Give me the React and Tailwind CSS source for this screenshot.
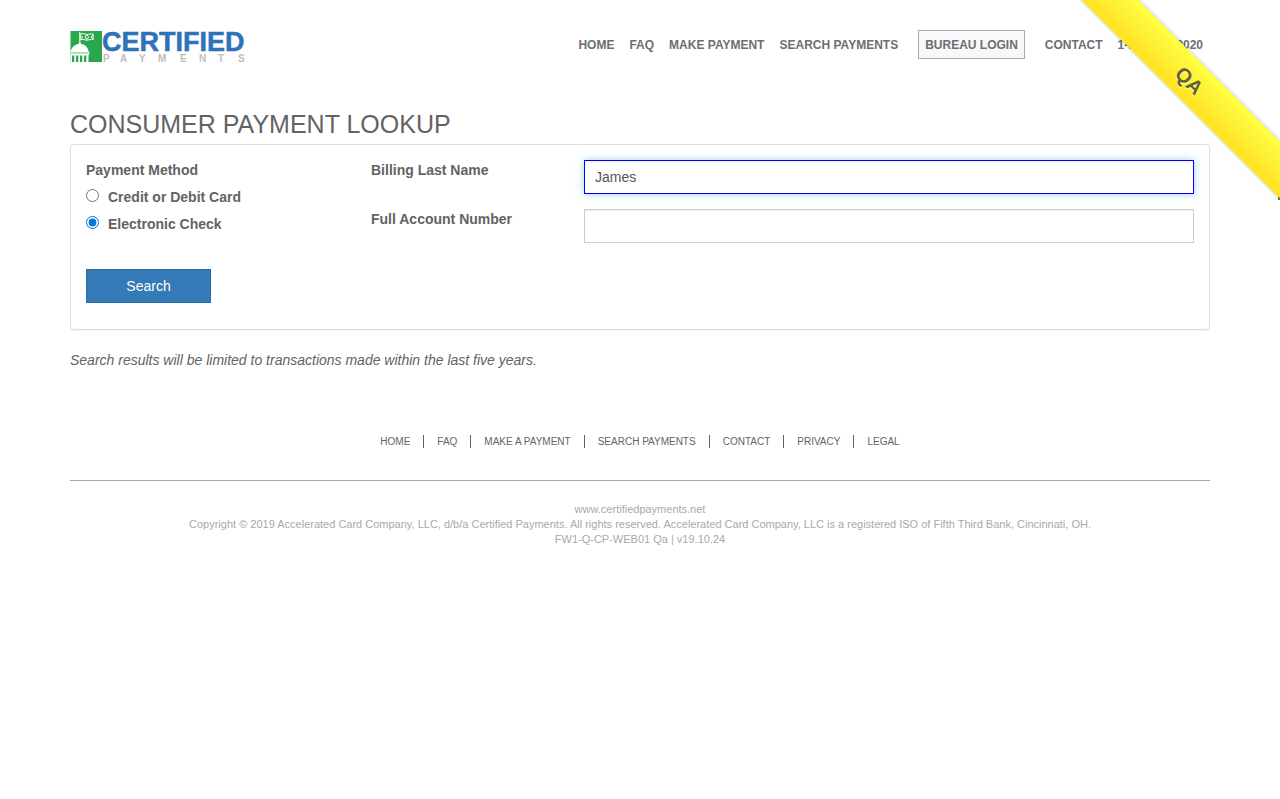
import { useState } from "react";

function Logo() {
  return (
    <svg viewBox="0 0 176 34" className="h-[34px] w-44 overflow-visible" role="img" aria-label="Certified Payments">
      <rect x="0.5" y="1" width="31.500" height="31" fill="#27a84a" />
      <path d="M9.800 2v12" stroke="#fff" strokeWidth="1" />
      <g fill="none" stroke="#fff" strokeWidth="1">
        <path d="M10.200 4.200c2.500-1.500 4.500.2 6.800.2s4-1 6.200-.4v5.600c-2.500-.6-4 .5-6.400.5s-4.400-1.400-6.600-.2z" />
        <ellipse cx="16.800" cy="7.200" rx="1.600" ry="1.800" />
        <path d="M11 5.800l1.800 1.400L11 8.600M22.800 5.400l-2 1.600 2 1.600" />
      </g>
      <path d="M0.500 22.200c.5-4.500 4.200-8 8.300-8.300v-1.400h2v1.400c4.200.3 7.600 3.800 8 8.300z" fill="#fff" />
      <path d="M0.500 21.700h18.800v2.800H18.500V32H0.500z" fill="#fff" />
      <path d="M0.500 22.900h18" stroke="#27a84a" strokeWidth="0.700" />
      <path d="M2 25.500h2.300V32H2zM6 25.500h2.300V32H6zM10 25.500h2.300V32H10zM14 25.500h2.300V32H14z" fill="#27a84a" />
      <text
        x="32"
        y="21"
        fontFamily="'Liberation Sans', Arial, sans-serif"
        fontWeight="700"
        fontSize="27"
        fill="#2f72b9"
        stroke="#2f72b9"
        strokeWidth="0.500"
      >
        CERTIFIED
      </text>
      <text
        x="33 50 69 88 110 129 148 168"
        y="32"
        fontFamily="'Liberation Sans', Arial, sans-serif"
        fontWeight="700"
        fontSize="10"
        fill="#bcbec0"
      >
        PAYMENTS
      </text>
    </svg>
  );
}

function Ribbon({ children }) {
  return (
    <div className="pointer-events-none absolute top-0 right-0 z-10 size-[200px] overflow-hidden">
      <div className="absolute right-0 bottom-0 h-1 w-0.5 bg-[#6f8a1c]" />
      <div className="absolute top-15 left-[-50px] flex h-10 w-[320px] rotate-45 items-center justify-center bg-linear-to-b from-[#ffff44] to-[#ffe11b] pt-0.5 text-xl leading-none font-bold text-[#665f38] shadow-[0_0_4px_rgba(0,0,0,0.3)] [text-shadow:1px_1px_0_#ffff88]">
        {children}
      </div>
    </div>
  );
}

const footerLinks = ["HOME", "FAQ", "MAKE A PAYMENT", "SEARCH PAYMENTS", "CONTACT", "PRIVACY", "LEGAL"];

const inputClass =
  "h-[34px] w-full border border-[#ccc] px-2.5 text-sm text-[#555] shadow-[inset_0_1px_1px_rgba(0,0,0,0.075)] outline-none focus:border-[#0000ff] focus:shadow-[inset_0_1px_1px_rgba(0,0,0,0.075),0_0_8px_rgba(102,175,233,0.6)]";

const radioClass = "mt-[2px] size-[13px] accent-[#0078d7]";

export default function App() {
  const [method, setMethod] = useState("check");
  const [lastName, setLastName] = useState("James");
  const [account, setAccount] = useState("");

  return (
    <div className="relative bg-white font-['Liberation_Sans',Arial,sans-serif] text-sm text-[#636363]">
      <Ribbon>QA</Ribbon>
      <div className="mx-auto max-w-[1170px] px-[15px]">
        <header className="flex items-start justify-between pt-[30px]">
          <a href="#home">
            <Logo />
          </a>
          <nav className="flex h-[29px] items-center gap-[15px] pr-[7px] text-xs font-bold text-[#6d6e71]">
            <a href="#home">HOME</a>
            <a href="#faq">FAQ</a>
            <a href="#make">MAKE PAYMENT</a>
            <a href="#search">SEARCH PAYMENTS</a>
            <a
              href="#bureau"
              className="mx-[5px] flex h-[29px] items-center border border-[#a7a9ac] bg-[#f8f8f8] px-1.5"
            >
              BUREAU LOGIN
            </a>
            <a href="#contact">CONTACT</a>
            <a href="tel:18665392020">1-866-539-2020</a>
          </nav>
        </header>

        <main>
          <h1 className="mt-[46px] text-[25px] leading-[28px]">CONSUMER PAYMENT LOOKUP</h1>
          <form
            className="mt-[6px] rounded border border-[#ddd] px-[15px] pt-[15px] pb-[26px] shadow-[0_1px_1px_rgba(0,0,0,0.05)]"
            onSubmit={(event) => event.preventDefault()}
          >
            <div className="grid grid-cols-[285fr_823fr]">
              <fieldset>
                <legend className="leading-5 font-bold">Payment Method</legend>
                <div className="mt-[7px] flex flex-col gap-[7px] font-bold">
                  <label className="flex items-start gap-[9px] leading-5">
                    <input
                      type="radio"
                      name="method"
                      className={radioClass}
                      checked={method === "card"}
                      onChange={() => setMethod("card")}
                    />
                    Credit or Debit Card
                  </label>
                  <label className="flex items-start gap-[9px] leading-5">
                    <input
                      type="radio"
                      name="method"
                      className={radioClass}
                      checked={method === "check"}
                      onChange={() => setMethod("check")}
                    />
                    Electronic Check
                  </label>
                </div>
              </fieldset>
              <div className="grid grid-cols-[213fr_610fr] content-start gap-y-[15px]">
                <label htmlFor="lastName" className="leading-5 font-bold">
                  Billing Last Name
                </label>
                <input
                  id="lastName"
                  type="text"
                  autoFocus
                  className={inputClass}
                  value={lastName}
                  onChange={(event) => setLastName(event.target.value)}
                />
                <label htmlFor="account" className="leading-5 font-bold">
                  Full Account Number
                </label>
                <input
                  id="account"
                  type="text"
                  className={inputClass}
                  value={account}
                  onChange={(event) => setAccount(event.target.value)}
                />
              </div>
            </div>
            <button
              type="submit"
              className="mt-[26px] h-[34px] w-[125px] border border-[#2e6da4] bg-[#337ab7] text-sm text-white"
            >
              Search
            </button>
          </form>
          <p className="mt-5 leading-5 italic">
            Search results will be limited to transactions made within the last five years.
          </p>
        </main>

        <footer className="mt-[65px]">
          <nav className="flex justify-center border-b border-[#a7a9ac] pb-8 text-[10px] leading-[13px]">
            {footerLinks.map((name) => (
              <a key={name} href="#" className="border-l border-[#636363] px-[13px] first:border-l-0">
                {name}
              </a>
            ))}
          </nav>
          <p className="mt-[21px] text-center text-[11px] leading-[15px] text-[#a7a9ac]">
            www.certifiedpayments.net
            <br />
            Copyright © 2019 Accelerated Card Company, LLC, d/b/a Certified Payments. All rights reserved. Accelerated
            Card Company, LLC is a registered ISO of Fifth Third Bank, Cincinnati, OH.
            <br />
            FW1-Q-CP-WEB01 Qa | v19.10.24
          </p>
        </footer>
      </div>
    </div>
  );
}
